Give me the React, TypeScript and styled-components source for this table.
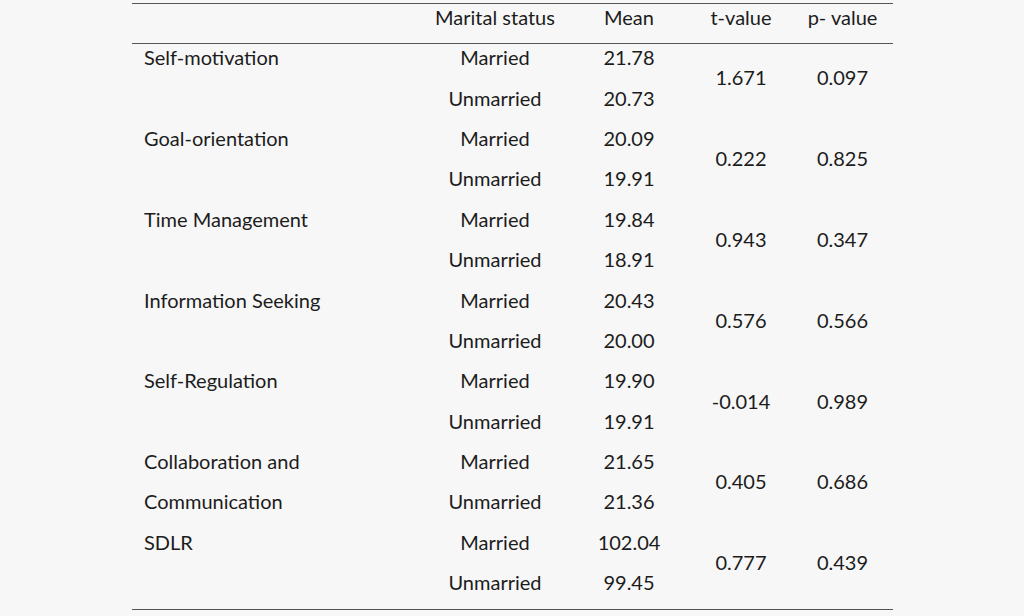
import React from "react";
import styled, { createGlobalStyle } from "styled-components";

type Group = {
  label: string[];
  married: string;
  unmarried: string;
  t: string;
  p: string;
};

const groups: Group[] = [
  { label: ["Self-motivation"], married: "21.78", unmarried: "20.73", t: "1.671", p: "0.097" },
  { label: ["Goal-orientation"], married: "20.09", unmarried: "19.91", t: "0.222", p: "0.825" },
  { label: ["Time Management"], married: "19.84", unmarried: "18.91", t: "0.943", p: "0.347" },
  { label: ["Information Seeking"], married: "20.43", unmarried: "20.00", t: "0.576", p: "0.566" },
  { label: ["Self-Regulation"], married: "19.90", unmarried: "19.91", t: "-0.014", p: "0.989" },
  { label: ["Collaboration and", "Communication"], married: "21.65", unmarried: "21.36", t: "0.405", p: "0.686" },
  { label: ["SDLR"], married: "102.04", unmarried: "99.45", t: "0.777", p: "0.439" },
];

export default function App() {
  return (
    <>
      <GlobalStyle />
      <Page>
        <Table>
          <HeadRow>
            <Cell $col={1} />
            <Cell $col={2}>Marital status</Cell>
            <Cell $col={3}>Mean</Cell>
            <Cell $col={4}>t-value</Cell>
            <Cell $col={5}>p- value</Cell>
          </HeadRow>
          <Body>
            {groups.map((g) => (
              <GroupGrid key={g.label.join(" ")}>
                <Label>
                  {g.label.map((l) => (
                    <LabelLine key={l}>{l}</LabelLine>
                  ))}
                </Label>
                <Cell $col={2} $row={1}>Married</Cell>
                <Cell $col={3} $row={1}>{g.married}</Cell>
                <Cell $col={2} $row={2}>Unmarried</Cell>
                <Cell $col={3} $row={2}>{g.unmarried}</Cell>
                <Stat $col={4}>{g.t}</Stat>
                <Stat $col={5}>{g.p}</Stat>
              </GroupGrid>
            ))}
          </Body>
        </Table>
      </Page>
    </>
  );
}

const GlobalStyle = createGlobalStyle`
  html, body {
    margin: 0;
    background: #f7f7f7;
  }
  body {
    font-family: Lato, "Liberation Sans", sans-serif;
    color: #1c1c1c;
  }
`;

const COLS = "290px 146px 122px 102px 101px";
const ROW = "40.4px";
const LIFT = "14px";

const Page = styled.div`
  width: 1024px;
  height: 616px;
  padding: 3px 0 0 132px;
  box-sizing: border-box;
`;

const Table = styled.div`
  width: 761px;
  border-top: 1.5px solid #555;
  border-bottom: 1.5px solid #555;
  font-size: 20px;
`;

const HeadRow = styled.div`
  display: grid;
  grid-template-columns: ${COLS};
  height: 39px;
  align-items: center;
  border-bottom: 1.5px solid #555;
`;

const Body = styled.div`
  display: flex;
  flex-direction: column;
`;

const GroupGrid = styled.div`
  display: grid;
  grid-template-columns: ${COLS};
  grid-template-rows: ${ROW} ${ROW};
  align-items: center;
`;

const Cell = styled.div<{ $col: number; $row?: number }>`
  grid-column: ${(p) => p.$col};
  ${(p) => (p.$row ? `grid-row: ${p.$row};` : "")}
  text-align: center;
  white-space: nowrap;
  padding-bottom: ${LIFT};
`;

const Label = styled.div`
  grid-column: 1;
  grid-row: 1 / span 2;
  align-self: start;
  padding-left: 12px;
`;

const LabelLine = styled.div`
  height: ${ROW};
  box-sizing: border-box;
  display: flex;
  align-items: center;
  padding-bottom: ${LIFT};
  white-space: nowrap;
`;

const Stat = styled.div<{ $col: number }>`
  grid-column: ${(p) => p.$col};
  grid-row: 1 / span 2;
  text-align: center;
  padding-bottom: ${LIFT};
`;
